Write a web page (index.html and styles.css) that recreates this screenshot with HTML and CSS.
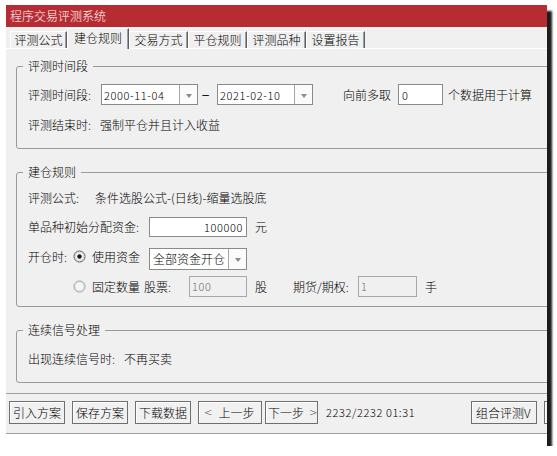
FILE: index.html
```html
<!DOCTYPE html>
<html lang="zh-CN">
<head>
<meta charset="utf-8">
<title>程序交易评测系统</title>
<link rel="stylesheet" href="styles.css">
</head>
<body>
<div class="window">
  <div class="titlebar">程序交易评测系统</div>
  <div class="tabs">
    <div class="tab first">评测公式</div>
    <div class="tab active">建仓规则</div>
    <div class="tab">交易方式</div>
    <div class="tab">平仓规则</div>
    <div class="tab">评测品种</div>
    <div class="tab">设置报告</div>
  </div>
  <div class="panel">
    <fieldset class="group g1">
      <legend>评测时间段</legend>
      <div class="row r-dates">
        <span class="lbl w73">评测时间段:</span>
        <div class="combo w97"><span class="val mono">2000-11-04</span><span class="drop"><i class="arrow"></i></span></div>
        <span class="dash">–</span>
        <div class="combo w96"><span class="val mono">2021-02-10</span><span class="drop"><i class="arrow"></i></span></div>
        <span class="pre">向前多取</span>
        <div class="input w45"><span class="mono">0</span></div>
        <span class="post">个数据用于计算</span>
      </div>
      <div class="row r-end"><span class="lbl w72">评测结束时:</span><span>强制平仓并且计入收益</span></div>
    </fieldset>

    <fieldset class="group g2">
      <legend>建仓规则</legend>
      <div class="row r-formula"><span class="lbl w67">评测公式:</span><span>条件选股公式-(日线)-缩量选股底</span></div>
      <div class="row r-fund">
        <span class="lbl w121">单品种初始分配资金:</span>
        <div class="input w98 right"><span class="mono">100000</span></div>
        <span class="unit">元</span>
      </div>
      <div class="row r-open">
        <span class="lbl w45 t18">开仓时:</span>
        <svg class="radio" width="13" height="13" viewBox="0 0 13 13"><circle cx="6.5" cy="6.5" r="5.5" fill="#f3f3f3" stroke="#5a5a5a"/><circle cx="6.5" cy="6.5" r="4.2" fill="none" stroke="#dcdcdc"/><circle cx="6.5" cy="6.5" r="2.2" fill="#1a1a1a"/></svg>
        <span class="opt t18">使用资金</span>
        <div class="combo w98 ml9"><span class="val cjk">全部资金开仓</span><span class="drop"><i class="arrow"></i></span></div>
      </div>
      <div class="row r-fixed">
        <svg class="radio ind" width="13" height="13" viewBox="0 0 13 13"><circle cx="6.5" cy="6.5" r="5.5" fill="#f5f5f5" stroke="#9a9a9a"/><circle cx="6.5" cy="6.5" r="4.2" fill="none" stroke="#e2e2e2"/></svg>
        <span class="opt">固定数量</span>
        <span class="lbl w45 ml4">股票:</span>
        <div class="input w58 disabled"><span class="mono">100</span></div>
        <span class="unit">股</span>
        <span class="lbl w65 ml26">期货/期权:</span>
        <div class="input w59 disabled"><span class="mono">1</span></div>
        <span class="unit ml10">手</span>
      </div>
    </fieldset>

    <fieldset class="group g3">
      <legend>连续信号处理</legend>
      <div class="row r-signal"><span class="lbl w96">出现连续信号时:</span><span>不再买卖</span></div>
    </fieldset>
  </div>
  <div class="footer">
    <button class="btn">引入方案</button>
    <button class="btn">保存方案</button>
    <button class="btn">下载数据</button>
    <button class="btn prev"><span class="ang">&lt;</span><span>上一步</span></button>
    <button class="btn next"><span>下一步</span><span class="ang">&gt;</span></button>
    <span class="status mono">2232/2232 01:31</span>
    <button class="btn combo-btn">组合评测V</button>
    <button class="btn partial"><svg width="12" height="16" viewBox="0 0 12 16"><circle cx="4" cy="3" r="2" fill="#e8b64c"/><ellipse cx="5" cy="10" rx="3.5" ry="5" fill="#2e9a5c"/></svg></button>
  </div>
  <div class="strip"></div>
</div>
</body>
</html>
```

FILE: styles.css
```css
* {
  box-sizing: border-box;
}

body {
  margin: 0;
  background: #ffffff;
  font-family: "Noto Sans CJK SC", "Noto Sans", sans-serif;
  font-size: 12px;
  font-weight: 300;
  line-height: 14px;
  color: #000;
}

.window {
  margin: 5px 0 0 6px;
  width: 541px;
  height: 441px;
  background: #f0f0f0;
  box-shadow: 5px 6px 2px #1c1c1c;
  overflow: hidden;
  display: flex;
  flex-direction: column;
}

.titlebar {
  flex: none;
  height: 22px;
  line-height: 22px;
  padding-left: 4px;
  background: #b72c33;
  color: #ffffff;
}

/* tabs */
.tabs {
  flex: none;
  height: 21px;
  display: flex;
  align-items: flex-end;
  padding-left: 4px;
  position: relative;
  z-index: 1;
}

.tab {
  flex: none;
  width: 59px;
  height: 17px;
  line-height: 15px;
  text-align: center;
  border-top: 1px solid #ffffff;
  border-left: 1px solid #ffffff;
  border-right: 1px solid #5e5e5e;
  box-shadow: inset -1px 0 0 #a0a0a0;
  background: #f0f0f0;
}

.tab.first {
  width: 57px;
}

.tab.active {
  width: 62px;
  height: 21px;
  margin-bottom: -1px;
  padding-top: 2px;
  line-height: 13px;
}

/* panel */
.panel {
  flex: none;
  height: 346px;
  border-top: 1px solid #ffffff;
  border-bottom: 1px solid #a0a0a0;
  padding: 10px 0 0 10px;
  display: flex;
  flex-direction: column;
}

.group {
  margin: 0 -30px 0 0;
  min-width: 0;
  border: 1px solid #9a9a9a;
  border-radius: 3px;
  padding: 0 0 0 11px;
}

.group legend {
  padding: 0 5px;
  margin-left: -5px;
  line-height: 14px;
  font-size: 12px;
}

.g1 {
  padding-top: 11px;
  padding-bottom: 16px;
}

.g2 {
  margin-top: 16px;
  padding-top: 12px;
  padding-bottom: 9px;
}

.g3 {
  margin-top: 16px;
  padding-top: 15px;
  padding-bottom: 16px;
}

.row {
  display: flex;
  align-items: center;
  white-space: nowrap;
}

.row > * {
  flex: none;
}

.r-dates { height: 21px; }
.r-end { margin-top: 13px; height: 14px; }
.r-formula { height: 14px; }
.r-fund { margin-top: 12px; height: 20px; }
.r-open { margin-top: 11px; height: 22px; align-items: flex-start; }
.r-fixed { margin-top: 6px; height: 21px; }
.r-signal { height: 14px; }

.lbl { display: inline-block; }
.w45 { width: 45px; }
.w65 { width: 65px; }
.w67 { width: 67px; }
.w72 { width: 72px; }
.w73 { width: 73px; }
.w96 { width: 96px; }
.w121 { width: 121px; }

.ml4 { margin-left: 4px; }
.ml9 { margin-left: 9px; }
.ml10 { margin-left: 10px; }
.ml26 { margin-left: 26px; }

.t18 { line-height: 18px; }

.mono {
  font-family: "Noto Sans CJK SC", sans-serif;
  font-size: 11px;
  font-weight: 300;
  font-variant-numeric: tabular-nums;
  letter-spacing: 0.6px;
}

/* combo box */
.combo {
  display: flex;
  align-items: stretch;
  height: 21px;
  border: 1px solid #8a8a8a;
  background: #ffffff;
}

.combo.w97 { width: 97px; }
.combo.w96 { width: 96px; }
.combo.w98 { width: 98px; height: 22px; }

.combo .val {
  flex: 1;
  display: flex;
  align-items: center;
  padding-left: 2px;
}

.combo .val.cjk {
  font-size: 12px;
  letter-spacing: 0;
  padding-left: 3px;
}

.combo .drop {
  flex: none;
  width: 18px;
  border-left: 1px solid #a6a6a6;
  background: #fbfbfb;
  display: flex;
  align-items: center;
  justify-content: center;
  padding-top: 2px;
}

.arrow {
  display: block;
  width: 0;
  height: 0;
  border-left: 3.5px solid transparent;
  border-right: 3.5px solid transparent;
  border-top: 4px solid #8a8a8a;
}

.dash {
  width: 19px;
  padding-right: 4px;
  text-align: center;
  font-family: "Liberation Sans", sans-serif;
}

.pre { margin-left: 30px; }
.post { margin-left: 5px; }
.unit { margin-left: 8px; }

/* text input */
.input {
  display: flex;
  align-items: center;
  height: 21px;
  border: 1px solid #8a8a8a;
  background: #ffffff;
  padding: 0 3px;
}

.input.w45 { width: 45px; margin-left: 7px; }
.input.w98 { width: 98px; height: 20px; padding-right: 3px; }
.input.w58 { width: 58px; }
.input.w59 { width: 59px; }

.input.right {
  justify-content: flex-end;
}

.input.disabled {
  background: #f0f0f0;
  border-color: #a8a8a8;
  color: #6d6d6d;
  align-items: flex-start;
  padding: 2px 2px 0;
}

.radio {
  display: block;
  margin-top: 0;
}

.r-open .radio { margin-top: 2px; }
.radio.ind { margin-left: 45px; }

.opt { margin-left: 6px; }

/* footer */
.footer {
  flex: none;
  height: 40px;
  border-bottom: 1px solid #a0a0a0;
  padding: 7px 0 0 3px;
  display: flex;
  align-items: flex-start;
  white-space: nowrap;
}

.btn {
  flex: none;
  appearance: none;
  height: 23px;
  margin: 0 0 0 7px;
  padding: 0 3px;
  border: 1px solid #6f6f6f;
  background: #f1f1f1;
  box-shadow: inset 1px 1px 0 #ffffff;
  font-family: "Noto Sans CJK SC", sans-serif;
  font-size: 12px;
  font-weight: 300;
  line-height: 21px;
  color: #000;
  display: flex;
  align-items: center;
}

.btn:first-child { margin-left: 0; }

.ang {
  font-family: "DejaVu Sans", sans-serif;
  font-size: 10px;
  font-weight: 300;
  color: #333;
}

.btn.prev {
  width: 64px;
  padding-left: 5px;
}

.btn.prev .ang { margin-right: 6px; }

.btn.next {
  width: 53px;
  margin-left: 3px;
  padding-left: 2px;
}

.btn.next .ang { margin-left: 5px; }

.status {
  flex: none;
  width: 145px;
  margin-left: 8px;
  line-height: 23px;
}

.btn.combo-btn {
  width: 66px;
  margin-left: 0;
  padding-left: 4px;
}

.btn.partial {
  width: 30px;
  padding-left: 1px;
}

.strip {
  flex: none;
  height: 12px;
  background: #ffffff;
}
```
